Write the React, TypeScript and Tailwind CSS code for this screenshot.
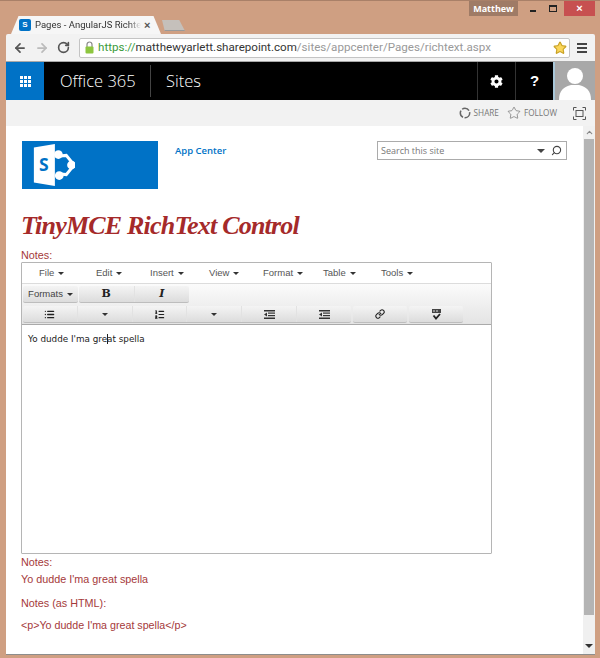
import { ChevronUp, Link, List, ListOrdered, RotateCw, Search, Star, ArrowLeft, ArrowRight } from "lucide-react";
import { FaCog } from "react-icons/fa";

const editorMenus = [
  { label: "File", w: "w-[57px]" },
  { label: "Edit", w: "w-[54px]" },
  { label: "Insert", w: "w-[59px]" },
  { label: "View", w: "w-[54px]" },
  { label: "Format", w: "w-[60px]" },
  { label: "Table", w: "w-[58px]" },
  { label: "Tools", w: "w-[50px]" },
];

const Caret = ({ className = "ml-[4px]" }: { className?: string }) => (
  <span className={`inline-block align-middle w-0 h-0 border-x-[3.5px] border-x-transparent border-t-[3.5px] border-t-[#333] ${className}`} />
);

const SpLogo = ({ size }: { size: number }) => (
  <svg width={size} height={size} viewBox="0 0 48 48" fill="none">
    <path d="M28 14 L38 13 L47 24 L38 35 L28 34" stroke="#fff" strokeWidth="3.5" />
    <circle cx="29" cy="12" r="5" fill="#fff" />
    <circle cx="44" cy="24" r="5" fill="#fff" />
    <circle cx="30" cy="36" r="5" fill="#fff" />
    <path d="M1 4 L25 0 L25 48 L1 44 Z" fill="#fff" />
    <text x="12.5" y="31" textAnchor="middle" fontSize="20" fontWeight="700" fill="#0072c6" fontFamily="'Open Sans', sans-serif">S</text>
  </svg>
);

// block style indent icon
const IndentIcon = () => (
  <svg width="11" height="9" viewBox="0 0 11 9">
    <rect x="0" y="0" width="11" height="1.5" fill="#333" />
    <rect x="0" y="7.5" width="11" height="1.5" fill="#333" />
    <rect x="4" y="2.5" width="7" height="1.2" fill="#333" />
    <rect x="4" y="5" width="7" height="1.2" fill="#333" />
    <path d="M0 4.5 L3 2.5 V6.5 Z" fill="#333" />
  </svg>
);

// "ABC" bar with a tick under it
const SpellIcon = () => (
  <svg width="11" height="11" viewBox="0 0 11 11">
    <rect x="1" y="0" width="9" height="4" fill="#444" />
    <rect x="2" y="1.5" width="2" height="1" fill="#ddd" />
    <rect x="5" y="1.5" width="2" height="1" fill="#ddd" />
    <path d="M2.5 6.5 L5 9.5 L9 5" stroke="#222" strokeWidth="1.8" fill="none" />
  </svg>
);

const ToolCell = ({ children }: { children?: React.ReactNode }) => (
  <div className="flex-1 flex items-center justify-center border-r border-[#e2e2e2] last:border-r-0 text-[#222]">{children}</div>
);

const EditorToolbarBtn = "flex h-[17px] rounded-[2px] border-b border-[#bdbdbd] bg-gradient-to-b from-[#f4f4f4] to-[#dcdcdc]";

export default function App() {
  return (
    <div className="w-[600px] h-[658px] bg-[#cf9f82] flex flex-col overflow-hidden border-t border-[#a98068] font-['Liberation_Sans',sans-serif]">
      {/* window title strip */}
      <div className="h-[33px] flex items-start justify-between shrink-0">
        <div className="flex items-end h-[33px] pl-[11px]">
          <div className="relative w-[150px] h-[18px] bg-[#f6f6f6] rounded-t-[3px] [clip-path:polygon(0_100%,5%_0,95%_0,100%_100%)] flex items-center pl-[8px]">
            <div className="w-[12px] h-[12px] bg-[#0072c6] rounded-[2px] flex items-center justify-center text-white text-[8px] font-bold shrink-0">S</div>
            <span className="ml-[4px] w-[106px] whitespace-nowrap overflow-hidden text-[9.5px] text-[#333] font-['Roboto',sans-serif] [mask-image:linear-gradient(to_right,black_88%,transparent)]">Pages - AngularJS Richtext</span>
            <span className="ml-[3px] text-[11px] font-bold text-[#555] leading-none">×</span>
          </div>
          <div className="ml-[1px] mb-[3px] w-[23px] h-[11px] bg-[#c5c0bb] border-b border-[#999] [clip-path:polygon(0_0,75%_0,100%_100%,12%_100%)]" />
        </div>
        <div className="flex items-start pr-[5px]">
          <div className="w-[49px] h-[15px] bg-[#9f7b66] text-white text-[9px] font-bold flex items-center justify-center font-['Open_Sans',sans-serif]">Matthew</div>
          <div className="w-[20px] h-[15px] ml-[5px] flex items-center justify-center">
            <div className="w-[6px] h-[2px] mt-[4px] bg-[#222]" />
          </div>
          <div className="w-[20px] h-[15px] flex items-center justify-center">
            <div className="w-[8px] h-[7px] border border-[#222] border-t-2" />
          </div>
          <div className="w-[31px] h-[15px] ml-[1px] bg-[#c75050] text-white text-[11px] font-bold flex items-center justify-center">×</div>
        </div>
      </div>

      {/* browser window */}
      <div className="flex-1 ml-[6px] mr-[5px] mb-[3px] flex flex-col min-h-0 border-b border-[#8d8d8d]">
        <div className="h-[28px] bg-[#f2f2f2] rounded-t-[2px] flex items-center border-b border-[#a8a8a8] shrink-0">
          <ArrowLeft size={14} strokeWidth={3} className="ml-[7px] text-[#555]" />
          <ArrowRight size={14} strokeWidth={3} className="ml-[8px] text-[#bbb]" />
          <RotateCw size={13} strokeWidth={3} className="ml-[8px] text-[#555]" />
          <div className="ml-[9px] w-[491px] h-[20px] bg-white border border-[#c4c4c4] rounded-[2px] flex items-center pl-[5px]">
            <svg width="9" height="13" viewBox="0 0 9 13" className="shrink-0">
              <path d="M2 6V3.5a2.5 2.5 0 0 1 5 0V6" stroke="#888" strokeWidth="1.2" fill="none" />
              <rect x="0.5" y="5.5" width="8" height="7" rx="1" fill="#8dc63f" />
            </svg>
            <span className="ml-[4px] text-[11.6px] whitespace-nowrap font-['Roboto',sans-serif] text-[#999]">
              <span className="text-[#3a9a3a]">https://</span>
              <span className="text-[#333]">matthewyarlett.sharepoint.com</span>
              /sites/appcenter/Pages/richtext.aspx
            </span>
            <Star size={14} className="ml-auto mr-[2px] shrink-0 text-[#c9a227] fill-[#fbd75b]" />
          </div>
          <div className="ml-[7px] flex flex-col gap-[2px]">
            <div className="w-[10px] h-[2px] bg-[#444]" />
            <div className="w-[10px] h-[2px] bg-[#444]" />
            <div className="w-[10px] h-[2px] bg-[#444]" />
          </div>
        </div>

        {/* suite bar */}
        <div className="h-[38px] bg-black flex items-stretch shrink-0 text-white font-['Open_Sans',sans-serif]">
          <div className="w-[38px] bg-[#0072c6] flex items-center justify-center">
            <div className="grid grid-cols-3 gap-[1px]">
              {[...Array(9)].map((_, i) => (
                <div key={i} className="w-[3px] h-[3px] bg-white" />
              ))}
            </div>
          </div>
          <div className="ml-[16px] text-[16.5px] flex items-center font-light w-[90px]">Office 365</div>
          <div className="w-px my-[3px] bg-[#444]" />
          <div className="ml-[15px] text-[16.5px] flex items-center font-light">Sites</div>
          <div className="ml-auto w-px bg-[#333]" />
          <div className="w-[37px] flex items-center justify-center">
            <FaCog size={13} />
          </div>
          <div className="w-px bg-[#333]" />
          <div className="w-[37px] flex items-center justify-center text-[15px] font-bold font-['Liberation_Sans',sans-serif]">?</div>
          <div className="w-[2px] bg-[#a9c7d8]" />
          <div className="w-[40px] bg-[#a8a8a8] flex items-end justify-center overflow-hidden">
            <svg width="34" height="34" viewBox="0 0 34 34">
              <circle cx="17" cy="10" r="8" fill="#fff" />
              <path d="M1 34 C1 24 6 21 13 19 H21 C28 21 33 24 33 34 Z" fill="#fff" />
            </svg>
          </div>
        </div>

        {/* share / follow bar */}
        <div className="h-[26px] bg-[#f2f2f2] flex items-center justify-end shrink-0 text-[8.2px] text-[#777] font-['Open_Sans',sans-serif] pr-[9px]">
          <svg width="12" height="12" viewBox="0 0 11 11" fill="none" stroke="#666" strokeWidth="1.4">
            <circle cx="5.5" cy="5.5" r="4.3" strokeDasharray="7 1.5" />
          </svg>
          <span className="ml-[3px]">SHARE</span>
          <Star size={14} strokeWidth={1} className="ml-[8px] text-[#555]" />
          <span className="ml-[3px]">FOLLOW</span>
          <svg className="ml-[16px]" width="13" height="13" viewBox="0 0 13 13" fill="none" stroke="#555">
            <path d="M.5 3.5v-3h3M9.5.5h3v3M12.5 9.5v3h-3M3.5 12.5h-3v-3" />
            <rect x="3" y="3.5" width="7" height="6" />
          </svg>
        </div>

        {/* page */}
        <div className="flex-1 min-h-0 flex bg-white">
          <div className="flex-1 min-w-0 pl-[16px] pt-[15px] text-[#a5393a]">
            <div className="flex items-start">
              <div className="w-[136px] h-[48px] bg-[#0072c6] pl-[11px] pt-[3px]">
                <SpLogo size={42} />
              </div>
              <div className="ml-[17px] mt-[3px] text-[9.5px] font-semibold text-[#0072c6] font-['Open_Sans',sans-serif]">App Center</div>
              <div className="ml-auto mr-[16px] w-[190px] h-[19px] border border-[#ababab] flex items-center pl-[3px] pr-[4px]">
                <span className="text-[9px] text-[#777] font-['Open_Sans',sans-serif]">Search this site</span>
                <Caret className="ml-auto mr-[6px] border-t-[#444] border-x-[4px] border-t-[4px]" />
                <Search size={11} strokeWidth={2.4} className="text-[#444] -scale-x-100" />
              </div>
            </div>

            <h1 className="mt-[18px] -ml-px h-[38px] text-[26px] leading-[38px] italic font-bold whitespace-nowrap tracking-[-0.8px] text-[#a52a2a] font-['Liberation_Serif',serif]">TinyMCE RichText Control</h1>

            <div className="mt-[3px] -ml-px text-[10.8px] leading-[14px]">Notes:</div>

            <div className="-ml-px w-[471px] h-[292px] border border-[#b5b5b5] rounded-[1px] flex flex-col">
              <div className="h-[21px] flex items-center pl-[17px] border-b border-[#dcdcdc] bg-white text-[9.5px] text-[#555] shrink-0">
                {editorMenus.map((m) => (
                  <div key={m.label} className={`${m.w} whitespace-nowrap`}>
                    {m.label}
                    <Caret />
                  </div>
                ))}
              </div>
              <div className="h-[41px] shrink-0 bg-gradient-to-b from-[#fbfbfb] to-[#e4e4e4] border-b border-[#aaa] px-[1px] pt-[2px] flex flex-col gap-[3px]">
                <div className="flex gap-[1px]">
                  <div className={`${EditorToolbarBtn} w-[55px] items-center justify-center text-[9.5px] text-[#444]`}>
                    Formats
                    <Caret />
                  </div>
                  <div className={`${EditorToolbarBtn} w-[110px]`}>
                    <ToolCell>
                      <span className="text-[11px] font-bold font-['DejaVu_Serif',serif]">B</span>
                    </ToolCell>
                    <ToolCell>
                      <span className="text-[11px] italic font-bold font-['DejaVu_Serif',serif]">I</span>
                    </ToolCell>
                  </div>
                </div>
                <div className="flex gap-[2px]">
                  <div className={`${EditorToolbarBtn} w-[328px]`}>
                    <ToolCell>
                      <List size={11} strokeWidth={2.8} />
                    </ToolCell>
                    <ToolCell>
                      <Caret className="" />
                    </ToolCell>
                    <ToolCell>
                      <ListOrdered size={11} strokeWidth={2.6} />
                    </ToolCell>
                    <ToolCell>
                      <Caret className="" />
                    </ToolCell>
                    <ToolCell>
                      <IndentIcon />
                    </ToolCell>
                    <ToolCell>
                      <IndentIcon />
                    </ToolCell>
                  </div>
                  <div className={`${EditorToolbarBtn} w-[54px]`}>
                    <ToolCell>
                      <Link size={10} strokeWidth={2.6} />
                    </ToolCell>
                  </div>
                  <div className={`${EditorToolbarBtn} w-[54px]`}>
                    <ToolCell>
                      <SpellIcon />
                    </ToolCell>
                  </div>
                </div>
              </div>
              <div className="flex-1 px-[6px] pt-[7px] text-[8.8px] leading-[14px] text-[#222] font-['DejaVu_Sans',sans-serif] whitespace-nowrap">
                Yo dudde I'ma gre<span className="border-l border-[#222] -mr-px" />at spella
              </div>
            </div>

            <div className="mt-[1px] -ml-px text-[10.8px] leading-[14px]">Notes:</div>
            <div className="mt-[3px] -ml-px text-[10.8px] leading-[14px]">Yo dudde I'ma great spella</div>
            <div className="mt-[10px] -ml-px text-[10.8px] leading-[14px]">Notes (as HTML):</div>
            <div className="mt-[8px] -ml-px text-[10.7px] leading-[14px]">&lt;p&gt;Yo dudde I'ma great spella&lt;/p&gt;</div>
          </div>

          {/* scrollbar */}
          <div className="w-[12px] bg-[#f0f0f0] flex flex-col items-center shrink-0">
            <ChevronUp size={9} strokeWidth={3} className="mt-[2px] text-[#888]" />
            <div className="mt-[2px] w-[10px] h-[476px] bg-[#b4b4b4]" />
            <div className="mt-auto mb-[6px] w-0 h-0 border-x-[4px] border-x-transparent border-t-[4px] border-t-[#333]" />
          </div>
        </div>
      </div>
    </div>
  );
}
